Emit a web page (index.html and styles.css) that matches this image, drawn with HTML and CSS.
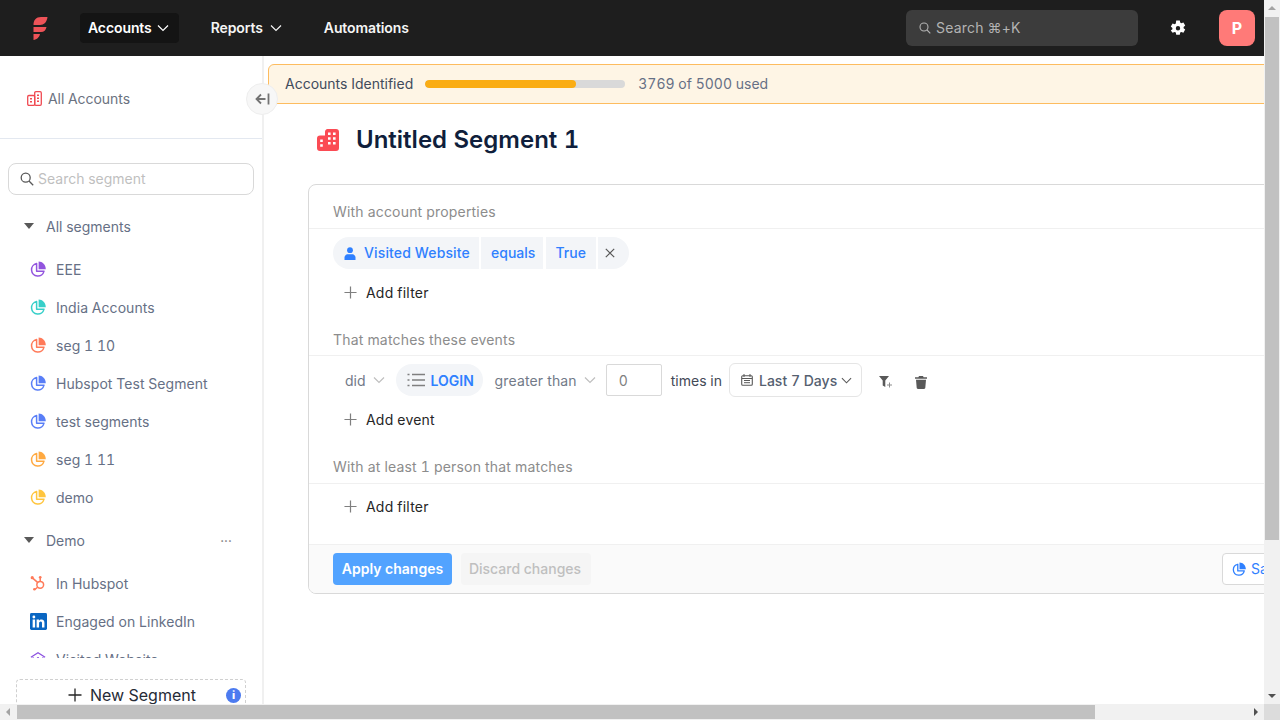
FILE: index.html
```html
<!DOCTYPE html>
<html lang="en">
<head>
<meta charset="utf-8">
<title>Untitled Segment 1</title>
<link rel="stylesheet" href="styles.css">
</head>
<body>
<svg class="defs" width="0" height="0" aria-hidden="true">
  <defs>
    <symbol id="pie" viewBox="0 0 16 16">
      <path d="M6.6 2.6A6.3 6.3 0 1 0 14 10.2H6.6Z" fill="none" stroke="currentColor" stroke-width="1.5" stroke-linejoin="round"/>
      <path d="M8.6 0.5C12.6 0.6 15.6 3.6 15.8 8.2H8.6Z" fill="currentColor"/>
    </symbol>
    <symbol id="chev" viewBox="0 0 12 12">
      <path d="M1 3.5 6 8.5 11 3.5" fill="none" stroke="currentColor" stroke-width="1.2"/>
    </symbol>
    <symbol id="plus" viewBox="0 0 14 14">
      <path d="M7 .5V13.500M.5 7H13.500" fill="none" stroke="currentColor" stroke-width="1.3"/>
    </symbol>
  </defs>
</svg>
<div class="window">
  <div class="page">
    <header class="topbar">
      <svg class="logo" viewBox="0 0 16 24" aria-hidden="true"><path d="M1.500 9C1.500 4 4 1 9 1H15.500C15 6 12 9 8 9Z M1.500 11H14.500C14 14 12 16 9 16H1.500Z M1.500 18H8C7.500 21 5 23.500 1.500 24Z" fill="#ee5358"/></svg>
      <nav class="nav">
        <a class="nav-item is-active">Accounts<svg class="nav-chev"><use href="#chev"/></svg></a>
        <a class="nav-item">Reports<svg class="nav-chev"><use href="#chev"/></svg></a>
        <a class="nav-item">Automations</a>
      </nav>
      <div class="global-search">
        <svg class="global-search-icon" viewBox="0 0 12 12" aria-hidden="true"><circle cx="5" cy="5" r="4" fill="none" stroke="currentColor" stroke-width="1.100"/><path d="M8 8l3.300 3.300" stroke="currentColor" stroke-width="1.100"/></svg>
        <span>Search ⌘+K</span>
      </div>
      <svg class="gear" viewBox="0 0 16 16" aria-hidden="true"><path fill-rule="evenodd" fill="#fff" d="M6.200.4h3.600l.4 2.100 1.100.65 2.100-.7 1.800 3.050-1.600 1.400v1.300l1.600 1.400-1.800 3.050-2.100-.7-1.100.65-.4 2.100H6.200l-.4-2.100-1.100-.65-2.100.7L.8 10.600l1.600-1.400V7.900L.8 6.500l1.800-3.050 2.100.7 1.100-.65ZM8 6a2.200 2.200 0 1 0 0 4.400A2.200 2.200 0 0 0 8 6Z"/></svg>
      <div class="avatar">P</div>
    </header>
    <div class="workspace">
      <aside class="sidebar">
        <div class="all-accounts">
          <svg class="all-icon" viewBox="0 0 15 15" aria-hidden="true"><g fill="none" stroke="#f04a52" stroke-width="1.300"><rect x=".7" y="4.500" width="7" height="9.800" rx="1.200"/><rect x="7.700" y=".7" width="6.600" height="13.600" rx="1.200"/></g><path d="M3 7h2v1.500H3zM3 10h2v1.500H3zM10 3.500h2V5h-2zM10 6.500h2V8h-2zM10 9.500h2V11h-2z" fill="#f04a52"/></svg>
          <span>All Accounts</span>
        </div>
        <div class="side-search">
          <svg class="side-search-icon" viewBox="0 0 14 14" aria-hidden="true"><circle cx="5.700" cy="5.700" r="4.500" fill="none" stroke="#595959" stroke-width="1.300"/><path d="M9 9l4.200 4.200" stroke="#595959" stroke-width="1.300"/></svg>
          <span>Search segment</span>
        </div>
        <div class="seg-list">
          <div class="seg-head"><i class="caret"></i><span>All segments</span></div>
          <div class="seg"><svg class="seg-icon c-purple"><use href="#pie"/></svg>EEE</div>
          <div class="seg"><svg class="seg-icon c-teal"><use href="#pie"/></svg>India Accounts</div>
          <div class="seg"><svg class="seg-icon c-coral"><use href="#pie"/></svg>seg 1 10</div>
          <div class="seg"><svg class="seg-icon c-blue"><use href="#pie"/></svg>Hubspot Test Segment</div>
          <div class="seg"><svg class="seg-icon c-blue"><use href="#pie"/></svg>test segments</div>
          <div class="seg"><svg class="seg-icon c-orange"><use href="#pie"/></svg>seg 1 11</div>
          <div class="seg"><svg class="seg-icon c-yellow"><use href="#pie"/></svg>demo</div>
          <div class="seg-head seg-head-demo"><i class="caret"></i><span>Demo</span><span class="more">•••</span></div>
          <div class="seg"><svg class="seg-icon" viewBox="0 0 18 18" aria-hidden="true"><g fill="none" stroke="#ff7a59" stroke-width="1.700"><circle cx="11.500" cy="11" r="3.800"/><path d="M11.500 7V3.500M8.500 8.300 3 3.500M8.500 13.800 5.800 16"/></g><circle cx="2.500" cy="3" r="1.800" fill="#ff7a59"/><circle cx="11.500" cy="2.500" r="1.500" fill="#ff7a59"/><circle cx="5" cy="16" r="1.500" fill="#ff7a59"/></svg>In Hubspot</div>
          <div class="seg"><svg class="seg-icon li" viewBox="0 0 18 18" aria-hidden="true"><rect width="18" height="18" rx="1.500" fill="#0a66c2"/><path d="M2.800 7h2.600v8.300H2.800zM7 7h2.500v1.200C10 7.300 11 6.800 12.200 6.800c2.300 0 3.100 1.400 3.100 3.800v4.700h-2.600v-4.200c0-1.200-.3-2-1.300-2-1.100 0-1.800.8-1.800 2v4.200H7z" fill="#fff"/><circle cx="4.100" cy="4.200" r="1.500" fill="#fff"/></svg>Engaged on LinkedIn</div>
          <div class="seg"><svg class="seg-icon" viewBox="0 0 18 18" aria-hidden="true"><path d="M1 7 9 2l8 5M3.500 7v9h11V7" fill="none" stroke="#8b50e0" stroke-width="1.400"/><circle cx="9" cy="8" r="1.300" fill="#8b50e0"/></svg>Visited Website</div>
        </div>
        <div class="new-seg">
          <svg class="new-plus"><use href="#plus"/></svg>
          <span>New Segment</span>
          <span class="info">i</span>
        </div>
      </aside>
      <main class="main">
        <div class="banner">
          <span class="banner-label">Accounts Identified</span>
          <div class="progress"><div class="progress-fill"></div></div>
          <span class="banner-used">3769 of 5000 used</span>
        </div>
        <div class="title-row">
          <svg class="title-icon" viewBox="0 0 22 22" aria-hidden="true"><path fill-rule="evenodd" fill="#fb4b54" d="M3 6.500H8V3C8 1.200 9 .3 10.500 0H19C21 0 22 1.200 22 3V19C22 21 21 22 19 22H3C1 22 0 21 0 19V9.500C0 7.500 1 6.500 3 6.500ZM3.200 10.500v2.600h2.600v-2.600Zm0 4.700v2.600h2.600v-2.600ZM11 3.500v2.600h2.600V3.500Zm5 0v2.600h2.600V3.500ZM11 8.200v2.600h2.600V8.200Zm5 0v2.600h2.600V8.200ZM11 13v2.600h2.600V13Zm5 0v2.600h2.600V13Z"/></svg>
          <h1>Untitled Segment 1</h1>
        </div>
        <section class="card">
          <div class="sec-title">With account properties</div>
          <div class="pills">
            <span class="pill pill-first"><svg class="person" viewBox="0 0 12 13" aria-hidden="true"><circle cx="6" cy="3.200" r="2.900" fill="#2f80ff"/><path d="M.5 13V10.500C.5 8.500 2 7.200 4 7.200h4c2 0 3.500 1.300 3.500 3.300V13Z" fill="#2f80ff"/></svg><span class="pill-wide">Visited Website</span></span>
            <span class="pill pill-equals">equals</span>
            <span class="pill pill-true">True</span>
            <span class="pill pill-close"><svg class="x" viewBox="0 0 10 10" aria-hidden="true"><path d="M.8.8l8.400 8.400M9.200.8.800 9.200" stroke="#595959" stroke-width="1.200"/></svg></span>
          </div>
          <div class="add add-1"><svg class="add-plus"><use href="#plus"/></svg>Add filter</div>
          <div class="sec-title sec-2">That matches these events</div>
          <div class="event">
            <span class="sel sel-did">did<svg class="sel-chev"><use href="#chev"/></svg></span>
            <span class="login"><svg class="list-icon" viewBox="0 0 18 14" aria-hidden="true"><path d="M5 1.500h13M5 7h13M5 12.500h13" stroke="#7f7f7f" stroke-width="1.400"/><path d="M.5 1.500h2M.5 7h2M.5 12.500h2" stroke="#7f7f7f" stroke-width="1.600"/></svg>LOGIN</span>
            <span class="sel sel-gt">greater than<svg class="sel-chev"><use href="#chev"/></svg></span>
            <span class="num">0</span>
            <span class="times">times in</span>
            <span class="date"><svg class="cal" viewBox="0 0 12 12" aria-hidden="true"><rect x=".7" y="1.700" width="10.600" height="9.600" rx="1" fill="none" stroke="#595959" stroke-width="1.100"/><path d="M3 0v3M9 0v3M1 4.500h10M3 6.500h6M3 8.700h6" stroke="#595959" stroke-width="1"/></svg>Last 7 Days<svg class="date-chev"><use href="#chev"/></svg></span>
            <svg class="funnel" viewBox="0 0 14 12" aria-hidden="true"><path d="M0 0h10L6.300 4.500V11L3.700 9.500V4.500Z" fill="#595959"/><path d="M10.500 6.500v5M8 9h5" stroke="#8c8c8c" stroke-width="1"/></svg>
            <svg class="trash" viewBox="0 0 12 13" aria-hidden="true"><path d="M4 0h4l.6 1.200H12v1.600H0V1.200h3.400ZM1 3.800h10l-.7 8c-.1.700-.5 1.200-1.200 1.200H2.900c-.7 0-1.100-.5-1.200-1.200Z" fill="#595959"/></svg>
          </div>
          <div class="add add-2"><svg class="add-plus"><use href="#plus"/></svg>Add event</div>
          <div class="sec-title sec-3">With at least 1 person that matches</div>
          <div class="add add-3"><svg class="add-plus"><use href="#plus"/></svg>Add filter</div>
          <div class="foot">
            <button class="btn-apply">Apply changes</button>
            <button class="btn-discard">Discard changes</button>
            <button class="btn-save"><svg class="save-icon"><use href="#pie"/></svg>Save as segment</button>
          </div>
        </section>
      </main>
      <button class="collapse" aria-label="Collapse sidebar"><svg viewBox="0 0 15 12" aria-hidden="true"><path d="M10.500 6H1.500M6 1.500 1.500 6 6 10.500" fill="none" stroke="#737373" stroke-width="1.800"/><path d="M13.500 .5v11" stroke="#737373" stroke-width="1.800"/></svg></button>
    </div>
  </div>
  <div class="vbar"><i class="arrow a-up"></i><div class="vthumb"></div><i class="arrow a-down"></i></div>
  <div class="hbar"><i class="arrow a-left"></i><div class="hthumb"></div><i class="arrow a-right"></i></div>
  <div class="corner"></div>
</div>
</body>
</html>
```
FILE: styles.css
```css
* { box-sizing: border-box; }
html, body { margin: 0; height: 100%; overflow: hidden; background: #fff; }
body { font-family: Inter, "Liberation Sans", sans-serif; font-size: 14px; color: #262626; font-variant-numeric: tabular-nums; }
.defs { position: absolute; }
.window {
  width: 1280px; height: 720px;
  display: grid;
  grid-template-columns: 1264px 16px;
  grid-template-rows: 704px 16px;
}
.page { display: flex; flex-direction: column; overflow: hidden; min-width: 0; min-height: 0; }

/* top bar */
.topbar {
  height: 56px; flex: none; background: #1e1e1e;
  display: flex; align-items: center;
  padding-left: 32px; color: #fff;
}
.logo { width: 16px; height: 24px; flex: none; }
.nav { display: flex; align-items: center; margin-left: 32px; }
.nav-item {
  display: flex; align-items: center; height: 30px; padding: 0 10px 1px 8px;
  font-weight: 600; font-size: 14px; color: #f5f5f5; border-radius: 4px;
  margin-right: 24px; letter-spacing: -.1px;
}
.nav-item.is-active { background: #141414; color: #fff; }
.nav-chev { width: 12px; height: 12px; margin-left: 7px; }
.is-active .nav-chev { margin-left: 5px; }
.global-search {
  width: 232px; height: 36px; margin-left: auto;
  background: #3c3c3c; border-radius: 6px;
  display: flex; align-items: center; padding: 0 0 1px 13px;
  color: #b3b3b3; font-size: 14px; letter-spacing: .2px;
}
.global-search-icon { width: 12px; height: 12px; margin: 1px 5px 0 0; }
.gear { width: 16px; height: 16px; margin-left: 32px; }
.avatar {
  width: 36px; height: 36px; margin: 0 9px 0 33px; border-radius: 8px;
  background: #ff7a78; color: #fff; font-weight: 700; font-size: 16px;
  display: flex; align-items: center; justify-content: center;
}

/* workspace */
.workspace { flex: 1; display: flex; position: relative; min-height: 0; }
.sidebar {
  width: 264px; flex: none; border-right: 2px solid #f0f0f0;
  display: flex; flex-direction: column; overflow: hidden; color: #667085;
}
.all-accounts {
  height: 83px; flex: none; border-bottom: 1px solid #e3e8f0;
  display: flex; align-items: center; padding: 2px 0 0 27px; color: #6b7280; letter-spacing: -.05px;
}
.all-icon { width: 15px; height: 15px; margin-right: 6px; }
.side-search {
  flex: none; height: 32px; margin: 24px 8px 0; width: 246px;
  border: 1px solid #d9d9d9; border-radius: 8px;
  display: flex; align-items: center; padding: 0 0 2px 11px; color: #bfbfbf;
}
.side-search-icon { width: 14px; height: 14px; margin: 2px 4px 0 0; }
.seg-list { flex: none; height: 463px; overflow: hidden; }
.seg-head { height: 32px; margin-top: 15px; display: flex; align-items: center; padding-left: 24px; color: #667085; }
.seg-head-demo { margin-top: 8px; }
.caret { width: 0; height: 0; border-style: solid; border-width: 6px 5.500px 0; border-color: #595959 transparent transparent; margin-right: 12px; }
.more { margin-left: auto; margin-right: 30px; font-size: 6px; letter-spacing: .5px; color: #7f7f7f; }
.seg { height: 38px; display: flex; align-items: center; padding-left: 30px; letter-spacing: .04px; }
.seg-head + .seg { margin-top: 8px; }
.seg-icon { width: 16px; height: 16px; margin-right: 10px; flex: none; }
.seg-icon.li { width: 17px; height: 17px; margin-right: 9px; }
.c-purple { color: #9254de; }
.c-teal { color: #36cfc9; }
.c-coral { color: #ff7a59; }
.c-blue { color: #597ef7; }
.c-orange { color: #ffa940; }
.c-yellow { color: #ffc53d; }
.new-seg {
  flex: none; height: 34px; margin: 21px 0 0 16px; width: 230px;
  border: 1px dashed #d0d0d0; border-radius: 4px;
  display: flex; align-items: center; padding: 0 0 2px 51px;
  color: #262b36; font-size: 16px;
}
.new-plus { width: 14px; height: 14px; margin-right: 8px; color: #262626; }
.info {
  width: 15px; height: 15px; margin-left: auto; margin-right: 4px; border-radius: 50%;
  background: #4c7bf0; color: #fff; font-size: 11px; font-weight: 800;
  display: flex; align-items: center; justify-content: center;
}
.collapse {
  position: absolute; left: 246px; top: 27px;
  width: 32px; height: 32px; border-radius: 50%; padding: 0;
  background: #f7f7f7; border: 1px solid #eeeeee;
  display: flex; align-items: center; justify-content: center;
}
.collapse svg { width: 15px; height: 12px; }

/* main */
.main { flex: 1; min-width: 0; overflow: hidden; padding: 8px 0 0 4px; }
.banner {
  width: 1180px; height: 40px;
  background: #fef5e5; border: 1px solid #fdbc5f; border-radius: 6px;
  display: flex; align-items: center; padding: 0 0 1px 16px; color: #4b5563;
}
.banner-label { color: #414b5c; }
.progress { width: 200px; height: 8px; border-radius: 4px; background: #d9d9d9; margin: 1px 13px 0 12px; overflow: hidden; }
.progress-fill { width: 75.500%; height: 100%; background: #faad14; border-radius: 4px; }
.banner-used { color: #667085; }
.title-row { display: flex; align-items: center; height: 36px; margin: 18px 0 0 49px; }
.title-icon { width: 22px; height: 22px; margin-right: 17px; }
h1 { margin: 0; font-size: 24px; font-weight: 600; color: #101f3c; line-height: 36px; }
.card {
  width: 1100px; height: 410px; margin: 26px 0 0 40px;
  border: 1px solid #d9d9d9; border-radius: 8px; position: relative;
  display: flex; flex-direction: column; overflow: hidden;
}
.sec-title {
  flex: none; height: 44px; padding: 17px 0 0 24px; line-height: 20px;
  color: #8c8c8c; border-bottom: 1px solid #f0f0f0; letter-spacing: .18px;
}
.sec-2 { margin-top: 9px; padding-top: 18px; }
.sec-3 { margin-top: 10px; }
.pills { display: flex; align-items: center; height: 32px; margin: 8px 0 0 24px; gap: 2px; }
.pill {
  height: 32px; display: flex; align-items: center; padding: 0 10px 2px;
  background: #f3f5f8; color: #2f80ff; font-weight: 500;
}
.pill-first { width: 146px; padding: 0 0 2px 11px; border-radius: 16px 0 0 16px; }
.pill-wide { letter-spacing: .13px; }
.pill-equals { width: 62px; padding: 0 0 2px 10px; margin-right: 1px; }
.pill-true { width: 50px; padding: 0 0 2px 9.500px; }
.pill-close { width: 31px; padding: 0 0 0 7px; border-radius: 0 16px 16px 0; }
.person { width: 12px; height: 13px; margin: 2px 8px 0 0; }
.x { width: 10px; height: 10px; }
.add { display: flex; align-items: center; height: 22px; color: #262626; flex: none; letter-spacing: .2px; }
.add-1 { margin: 12px 0 0 35px; }
.add-2 { margin: 11px 0 0 35px; }
.add-3 { margin: 11px 0 0 35px; }
.add-plus { width: 13px; height: 13px; margin-right: 9px; color: #7f7f7f; }
.event { display: flex; align-items: center; height: 34px; margin: 7px 0 0 36px; flex: none; }
.sel { display: flex; align-items: center; color: #727a88; }
.sel-gt { letter-spacing: .15px; }
.sel-chev { width: 12px; height: 12px; margin-left: 7px; color: #bfbfbf; }
.sel-did { margin-right: 11px; }
.login {
  height: 32px; width: 87px; border-radius: 16px; background: #f3f5f8;
  display: flex; align-items: center; padding-left: 11px;
  color: #2f80ff; font-weight: 600; margin-right: 12px;
}
.list-icon { width: 18px; height: 14px; margin-right: 6px; }
.num {
  width: 56px; height: 32px; margin-left: 10px;
  border: 1px solid #d9d9d9; border-radius: 2px;
  display: flex; align-items: center; padding-left: 12px; color: #7f7f7f;
}
.times { margin: 0 7px 0 9px; color: #434a57; }
.date {
  width: 133px; height: 34px; border: 1px solid #e5e5e5; border-radius: 6px;
  display: flex; align-items: center; padding-left: 11px; color: #556070; font-weight: 500;
}
.cal { width: 12px; height: 12px; margin-right: 6px; }
.date-chev { width: 11px; height: 11px; margin-left: 4px; color: #595959; }
.funnel { width: 14px; height: 12px; margin: 4px 0 0 17px; }
.trash { width: 12px; height: 13px; margin: 4px 0 0 22px; }
.foot {
  margin-top: auto; flex: none; height: 49px;
  background: #fafafa; border-top: 1px solid #f0f0f0;
  display: flex; align-items: center; padding: 0 16px 0 24px;
}
button { font-family: inherit; font-size: 14px; cursor: pointer; }
.btn-apply {
  width: 119px; height: 32px; border: 0; border-radius: 4px;
  background: #52a3ff; color: #fff; font-weight: 600; padding: 0 0 2px;
}
.btn-discard {
  width: 130px; height: 32px; margin-left: 9px; border: 0; border-radius: 4px;
  background: #f5f5f5; color: #bfbfbf; font-weight: 500; padding: 0 2px 2px 0;
}
.btn-save {
  width: 169px; height: 32px; margin-left: auto; background: #fff; color: #2f80ff;
  border: 1px solid #d9d9d9; border-radius: 4px; padding: 0 0 2px 9px;
  display: flex; align-items: center;
}
.save-icon { width: 14px; height: 14px; margin: 2px 5px 0 0; color: #2f80ff; }

/* scrollbars */
.vbar { background: #f1f1f1; display: flex; flex-direction: column; align-items: center; grid-row: 1; grid-column: 2; }
.hbar { background: #f1f1f1; display: flex; align-items: center; grid-row: 2; grid-column: 1; }
.corner { background: #dcdcdc; grid-row: 2; grid-column: 2; }
.vthumb { width: 14px; height: 523px; background: #c1c1c1; margin-top: 7px; }
.hthumb { width: 1078px; height: 14px; background: #c1c1c1; margin-left: 7px; }
.arrow { width: 0; height: 0; border-style: solid; flex: none; }
.a-up { border-width: 0 4px 4px; border-color: transparent transparent #a3a3a3; margin-top: 6px; }
.a-down { border-width: 4px 4px 0; border-color: #505050 transparent transparent; margin-top: auto; margin-bottom: 6px; }
.a-left { border-width: 4px 4px 4px 0; border-color: transparent #a3a3a3 transparent transparent; margin-left: 6px; }
.a-right { border-width: 4px 0 4px 4px; border-color: transparent transparent transparent #505050; margin-left: auto; margin-right: 6px; }
```
